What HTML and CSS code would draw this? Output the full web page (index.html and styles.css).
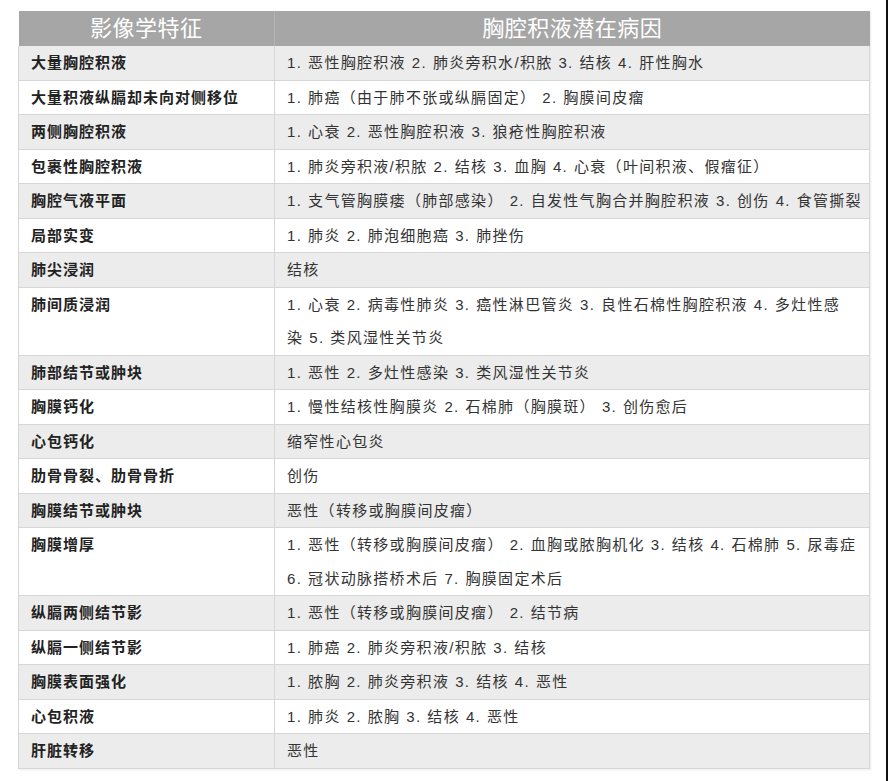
FILE: index.html
```html
<!DOCTYPE html>
<html lang="zh">
<head>
<meta charset="utf-8">
<title>胸腔积液潜在病因</title>
<link rel="stylesheet" href="styles.css">
</head>
<body>
<div class="page">
  <table class="causes">
    <colgroup><col class="c1"><col class="c2"></colgroup>
    <thead>
      <tr><th>影像学特征</th><th>胸腔积液潜在病因</th></tr>
    </thead>
    <tbody>
      <tr><td>大量胸腔积液</td><td>1. 恶性胸腔积液 2. 肺炎旁积水/积脓 3. 结核 4. 肝性胸水</td></tr>
      <tr><td>大量积液纵膈却未向对侧移位</td><td>1. 肺癌（由于肺不张或纵膈固定） 2. 胸膜间皮瘤</td></tr>
      <tr><td>两侧胸腔积液</td><td>1. 心衰 2. 恶性胸腔积液 3. 狼疮性胸腔积液</td></tr>
      <tr><td>包裹性胸腔积液</td><td>1. 肺炎旁积液/积脓 2. 结核 3. 血胸 4. 心衰（叶间积液、假瘤征）</td></tr>
      <tr><td>胸腔气液平面</td><td>1. 支气管胸膜瘘（肺部感染） 2. 自发性气胸合并胸腔积液 3. 创伤 4. 食管撕裂</td></tr>
      <tr><td>局部实变</td><td>1. 肺炎 2. 肺泡细胞癌 3. 肺挫伤</td></tr>
      <tr><td>肺尖浸润</td><td>结核</td></tr>
      <tr><td>肺间质浸润</td><td>1. 心衰 2. 病毒性肺炎 3. 癌性淋巴管炎 3. 良性石棉性胸腔积液 4. 多灶性感<br>染 5. 类风湿性关节炎</td></tr>
      <tr><td>肺部结节或肿块</td><td>1. 恶性 2. 多灶性感染 3. 类风湿性关节炎</td></tr>
      <tr><td>胸膜钙化</td><td>1. 慢性结核性胸膜炎 2. 石棉肺（胸膜斑） 3. 创伤愈后</td></tr>
      <tr><td>心包钙化</td><td>缩窄性心包炎</td></tr>
      <tr><td>肋骨骨裂、肋骨骨折</td><td>创伤</td></tr>
      <tr><td>胸膜结节或肿块</td><td>恶性（转移或胸膜间皮瘤）</td></tr>
      <tr><td>胸膜增厚</td><td>1. 恶性（转移或胸膜间皮瘤） 2. 血胸或脓胸机化 3. 结核 4. 石棉肺 5. 尿毒症 6. 冠状动脉搭桥术后 7. 胸膜固定术后</td></tr>
      <tr><td>纵膈两侧结节影</td><td>1. 恶性（转移或胸膜间皮瘤） 2. 结节病</td></tr>
      <tr><td>纵膈一侧结节影</td><td>1. 肺癌 2. 肺炎旁积液/积脓 3. 结核</td></tr>
      <tr><td>胸膜表面强化</td><td>1. 脓胸 2. 肺炎旁积液 3. 结核 4. 恶性</td></tr>
      <tr><td>心包积液</td><td>1. 肺炎 2. 脓胸 3. 结核 4. 恶性</td></tr>
      <tr><td>肝脏转移</td><td>恶性</td></tr>
    </tbody>
  </table>
</div>
</body>
</html>
```

FILE: styles.css
```css
html, body {
  margin: 0;
  padding: 0;
  background: #ffffff;
}

.page {
  box-sizing: border-box;
  width: 888px;
  min-height: 781px;
  padding: 11px 0 0 18px;
  border-right: 2px solid #111111;
  font-family: "Liberation Sans", "Noto Sans CJK SC", sans-serif;
}

.causes {
  width: 851px;
  border-collapse: collapse;
  table-layout: fixed;
  box-shadow: 1px 1px 2px rgba(0, 0, 0, 0.08);
}

.c1 { width: 256px; }
.c2 { width: 595px; }

.causes th {
  background: #a6a6a6;
  color: #ffffff;
  font-weight: normal;
  font-size: 22px;
  letter-spacing: 0.5px;
  height: 35px;
  line-height: 35px;
  padding: 0;
  text-align: center;
  border-left: 1px solid #b4b4b4;
}

.causes th:first-child { border-left: none; }

.causes td {
  font-size: 15px;
  letter-spacing: 1.3px;
  word-spacing: 0.5px;
  line-height: 33.5px;
  padding: 0 6px 0 12px;
  vertical-align: top;
  color: #333333;
  border-bottom: 1px solid #d6d6d6;
  border-left: 1px solid #d6d6d6;
  border-right: 1px solid #d6d6d6;
}

.causes td:first-child {
  font-weight: bold;
  color: #222222;
  letter-spacing: 1px;
  word-spacing: 0;
}

.causes tbody tr:nth-child(odd) td {
  background: #ececec;
}

.causes tbody tr:nth-child(even) td {
  background: #ffffff;
}
```
